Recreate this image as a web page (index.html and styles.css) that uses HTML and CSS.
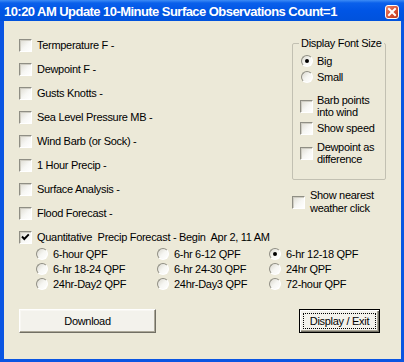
FILE: index.html
```html
<!DOCTYPE html>
<html>
<head>
<meta charset="utf-8">
<link rel="stylesheet" href="styles.css">
</head>
<body>
<div class="window">
  <div class="titlebar">
    <span class="title">10:20 AM Update 10-Minute Surface Observations Count=1</span>
    <span class="close">
      <svg width="14" height="14" viewBox="0 0 14 14">
        <defs>
          <linearGradient id="cg" x1="0" y1="0" x2="1" y2="1">
            <stop offset="0" stop-color="#ef8c6c"/>
            <stop offset="0.5" stop-color="#d9553a"/>
            <stop offset="1" stop-color="#b83418"/>
          </linearGradient>
        </defs>
        <rect x="0.5" y="0.5" width="13" height="13" rx="2.5" fill="url(#cg)" stroke="#ffffff"/>
        <path d="M4 4 L10 10 M10 4 L4 10" stroke="#ffffff" stroke-width="2" stroke-linecap="square"/>
      </svg>
    </span>
  </div>
  <div class="frame">
    <div class="client">
      <div class="top">
        <div class="left">
          <div class="row"><span class="cb"></span><span class="lbl">Termperature F -</span></div>
          <div class="row"><span class="cb"></span><span class="lbl">Dewpoint F -</span></div>
          <div class="row"><span class="cb"></span><span class="lbl">Gusts Knotts -</span></div>
          <div class="row"><span class="cb"></span><span class="lbl">Sea Level Pressure MB -</span></div>
          <div class="row"><span class="cb"></span><span class="lbl">Wind Barb (or Sock) -</span></div>
          <div class="row"><span class="cb"></span><span class="lbl">1 Hour Precip -</span></div>
          <div class="row"><span class="cb"></span><span class="lbl">Surface Analysis -</span></div>
          <div class="row"><span class="cb"></span><span class="lbl">Flood Forecast -</span></div>
          <div class="row"><span class="cb"><svg width="11" height="11" viewBox="0 0 11 11"><path d="M2 4.5 L4.3 7 L8.8 2.4" fill="none" stroke="#000" stroke-width="1.9"/></svg></span><span class="lbl">Quantitative&nbsp; Precip Forecast - Begin&nbsp; Apr 2, 11 AM</span></div>
        </div>
        <div class="right">
          <fieldset class="group">
            <legend>Display Font Size</legend>
            <div class="opt big"><span class="rb on"></span><span>Big</span></div>
            <div class="opt small"><span class="rb"></span><span>Small</span></div>
            <div class="opt barb"><span class="cb"></span><span class="multi">Barb points<br>into wind</span></div>
            <div class="opt speed"><span class="cb"></span><span>Show speed</span></div>
            <div class="opt dew"><span class="cb"></span><span class="multi">Dewpoint as<br>difference</span></div>
          </fieldset>
          <div class="nearest"><span class="cb"></span><span class="multi2">Show nearest<br>weather click</span></div>
        </div>
      </div>
      <div class="qpf">
        <div class="ropt"><span class="rb"></span><span>6-hour QPF</span></div>
        <div class="ropt"><span class="rb"></span><span>6-hr 6-12 QPF</span></div>
        <div class="ropt"><span class="rb on"></span><span>6-hr 12-18 QPF</span></div>
        <div class="ropt"><span class="rb"></span><span>6-hr 18-24 QPF</span></div>
        <div class="ropt"><span class="rb"></span><span>6-hr 24-30 QPF</span></div>
        <div class="ropt"><span class="rb"></span><span>24hr QPF</span></div>
        <div class="ropt"><span class="rb"></span><span>24hr-Day2 QPF</span></div>
        <div class="ropt"><span class="rb"></span><span>24hr-Day3 QPF</span></div>
        <div class="ropt"><span class="rb"></span><span>72-hour QPF</span></div>
      </div>
      <div class="buttons">
        <div class="btn download">Download</div>
        <div class="btn default"><span class="focus">Display / Exit</span></div>
      </div>
    </div>
  </div>
</div>
</body>
</html>
```
FILE: styles.css
```css
html, body {
  margin: 0;
  padding: 0;
  background: #ece9d8;
}
.window {
  width: 404px;
  height: 362px;
  display: flex;
  flex-direction: column;
  font-family: "Liberation Sans", Arial, sans-serif;
  font-size: 11px;
  letter-spacing: -0.3px;
  color: #000;
}
.titlebar {
  height: 21px;
  flex: none;
  display: flex;
  align-items: center;
  justify-content: space-between;
  padding: 0 5px 0 4px;
  background: linear-gradient(#3d8cf5 0px, #0a60eb 3px, #0055e5 50%, #0052dc 100%);
}
.title {
  color: #fff;
  font-weight: bold;
  font-size: 13px;
  letter-spacing: -0.55px;
  padding-top: 2px;
  white-space: nowrap;
}
.close {
  display: flex;
  margin-top: 2px;
}
.frame {
  flex: 1;
  display: flex;
  border-left: 4px solid #0a55e2;
  border-right: 3px solid #0a55e2;
  border-bottom: 3px solid #0a55e2;
}
.client {
  flex: 1;
  display: flex;
  flex-direction: column;
  padding: 16px 15px 0 15px;
}
.top {
  display: flex;
  justify-content: space-between;
  align-items: flex-start;
}
.left {
  display: flex;
  flex-direction: column;
  gap: 11px;
  padding-top: 2px;
}
.row {
  height: 13px;
  display: flex;
  align-items: center;
  gap: 5px;
  white-space: nowrap;
}
.lbl {
  line-height: 13px;
}
.cb {
  flex: none;
  width: 13px;
  height: 13px;
  box-sizing: border-box;
  border: 1px solid;
  border-color: #8f8e84 #ffffff #ffffff #8f8e84;
  box-shadow: inset 1px 1px 0 #cfcdc3;
  background: linear-gradient(135deg, #dedcd2 0%, #f7f7f4 55%, #ffffff 100%);
  display: flex;
  align-items: center;
  justify-content: center;
}
.rb {
  flex: none;
  width: 12px;
  height: 12px;
  box-sizing: border-box;
  border-radius: 50%;
  border: 1px solid;
  border-color: #8f8e84 #ffffff #ffffff #8f8e84;
  background: linear-gradient(135deg, #d9d7cd 0%, #f6f6f2 50%, #ffffff 100%);
  display: flex;
  align-items: center;
  justify-content: center;
}
.rb.on::after {
  content: "";
  width: 4px;
  height: 4px;
  border-radius: 50%;
  background: #000;
}
.right {
  width: 94px;
  display: flex;
  flex-direction: column;
}
.group {
  margin: 0;
  padding: 0 0 14px 7px;
  border: 1px solid #c2c0b2;
  border-radius: 2px;
  min-width: 0;
}
.group legend {
  margin-left: -1px;
  padding: 0 2px;
  line-height: 13px;
  white-space: nowrap;
}
.opt {
  display: flex;
  align-items: center;
  gap: 4px;
  line-height: 13px;
  white-space: nowrap;
}
.opt .rb {
  width: 12px;
  margin-left: 1px;
}
.big { margin-top: 5px; height: 12px; }
.small { margin-top: 4px; height: 12px; }
.barb { margin-top: 11px; }
.speed { margin-top: 4px; }
.dew { margin-top: 6px; }
.multi {
  line-height: 12px;
}
.nearest {
  margin-top: 9px;
  display: flex;
  align-items: center;
  gap: 5px;
  white-space: nowrap;
}
.multi2 {
  line-height: 13px;
}
.qpf {
  margin: 2px 0 0 17px;
  display: grid;
  grid-template-columns: 121px 112px 1fr;
  grid-auto-rows: 15px;
}
.ropt {
  display: flex;
  align-items: center;
  gap: 5px;
  white-space: nowrap;
}
.buttons {
  margin-top: 18px;
  display: flex;
  justify-content: space-between;
  padding-right: 6px;
}
.btn {
  box-sizing: border-box;
  height: 24px;
  display: flex;
  align-items: center;
  justify-content: center;
  background: #f3f2ec;
  border: 1px solid;
  border-color: #ffffff #716f64 #716f64 #ffffff;
  box-shadow: inset -1px -1px 0 #aca899, inset 1px 1px 0 #f8f7f3;
}
.download {
  width: 137px;
}
.default {
  width: 81px;
  border: 1px solid #000;
  padding: 3px;
  box-shadow: inset 1px 1px 0 #ffffff, inset -1px -1px 0 #716f64, inset -2px -2px 0 #aca899;
  align-items: stretch;
}
.focus {
  flex: 1;
  display: flex;
  align-items: center;
  justify-content: center;
  border: 1px dotted #000;
}
```
